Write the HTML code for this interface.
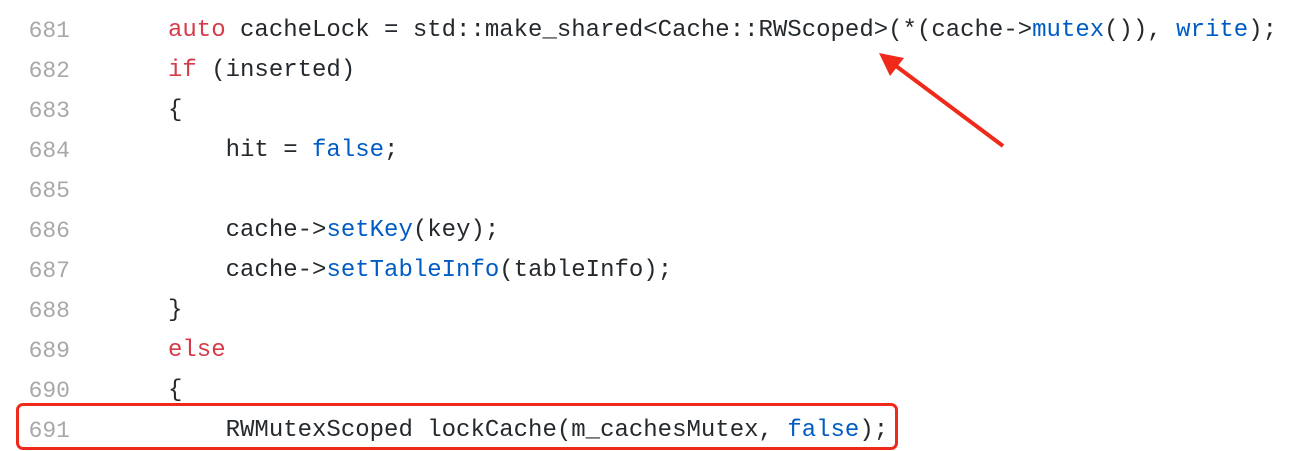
<html><head><style>
body{margin:0;width:1292px;height:450px;background:#fff;overflow:hidden;position:relative;font-family:"Liberation Mono","DejaVu Sans Mono",monospace;}
.l{position:absolute;left:0;height:40px;line-height:40px;font-size:24px;white-space:pre;color:#24292e;}
.n{position:absolute;left:0;width:70px;text-align:right;color:#a8a8a8;font-size:23px;}
.c{position:absolute;left:168px;}
.k{color:#d73a49}.b{color:#005cc5}
</style></head><body>
<div class="l" style="top:11px"><span class="n">681</span><span class="c"><span class="k">auto</span> cacheLock = std::make_shared&lt;Cache::RWScoped&gt;(*(cache-&gt;<span class="b">mutex</span>()), <span class="b">write</span>);</span></div>
<div class="l" style="top:51px"><span class="n">682</span><span class="c"><span class="k">if</span> (inserted)</span></div>
<div class="l" style="top:91px"><span class="n">683</span><span class="c">{</span></div>
<div class="l" style="top:131px"><span class="n">684</span><span class="c">    hit = <span class="b">false</span>;</span></div>
<div class="l" style="top:171px"><span class="n">685</span></div>
<div class="l" style="top:211px"><span class="n">686</span><span class="c">    cache-&gt;<span class="b">setKey</span>(key);</span></div>
<div class="l" style="top:251px"><span class="n">687</span><span class="c">    cache-&gt;<span class="b">setTableInfo</span>(tableInfo);</span></div>
<div class="l" style="top:291px"><span class="n">688</span><span class="c">}</span></div>
<div class="l" style="top:331px"><span class="n">689</span><span class="c"><span class="k">else</span></span></div>
<div class="l" style="top:371px"><span class="n">690</span><span class="c">{</span></div>
<div class="l" style="top:411px"><span class="n">691</span><span class="c">    RWMutexScoped lockCache(m_cachesMutex, <span class="b">false</span>);</span></div>
<div style="position:absolute;left:16px;top:403px;width:876px;height:41px;border:3px solid #f02a1a;border-radius:7px;"></div>
<svg style="position:absolute;left:0;top:0" width="1292" height="450">
<line x1="1003" y1="146" x2="896" y2="66" stroke="#f02a1a" stroke-width="4"/>
<polygon points="879,53 904,58 890,76" fill="#f02a1a"/>
</svg>
</body></html>
